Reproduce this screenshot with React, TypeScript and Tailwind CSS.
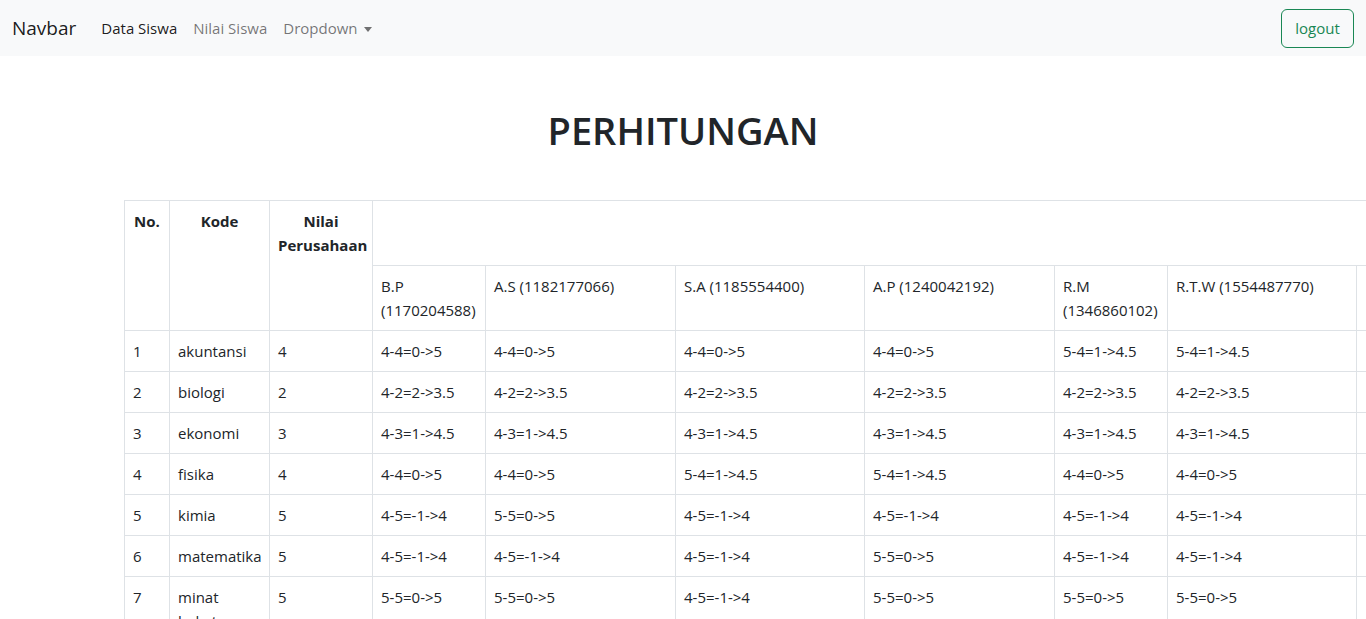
const students = [
  "B.P (1170204588)",
  "A.S (1182177066)",
  "S.A (1185554400)",
  "A.P (1240042192)",
  "R.M (1346860102)",
  "R.T.W (1554487770)",
];

const colWidths = [45, 100, 103, 113, 190, 189, 190, 113, 189, 190];

const rows: { no: number; kode: string; nilai: number; hasil: string[] }[] = [
  { no: 1, kode: "akuntansi", nilai: 4, hasil: ["4-4=0->5", "4-4=0->5", "4-4=0->5", "4-4=0->5", "5-4=1->4.5", "5-4=1->4.5"] },
  { no: 2, kode: "biologi", nilai: 2, hasil: ["4-2=2->3.5", "4-2=2->3.5", "4-2=2->3.5", "4-2=2->3.5", "4-2=2->3.5", "4-2=2->3.5"] },
  { no: 3, kode: "ekonomi", nilai: 3, hasil: ["4-3=1->4.5", "4-3=1->4.5", "4-3=1->4.5", "4-3=1->4.5", "4-3=1->4.5", "4-3=1->4.5"] },
  { no: 4, kode: "fisika", nilai: 4, hasil: ["4-4=0->5", "4-4=0->5", "5-4=1->4.5", "5-4=1->4.5", "4-4=0->5", "4-4=0->5"] },
  { no: 5, kode: "kimia", nilai: 5, hasil: ["4-5=-1->4", "5-5=0->5", "4-5=-1->4", "4-5=-1->4", "4-5=-1->4", "4-5=-1->4"] },
  { no: 6, kode: "matematika", nilai: 5, hasil: ["4-5=-1->4", "4-5=-1->4", "4-5=-1->4", "5-5=0->5", "4-5=-1->4", "4-5=-1->4"] },
  { no: 7, kode: "minat bakat", nilai: 5, hasil: ["5-5=0->5", "5-5=0->5", "4-5=-1->4", "5-5=0->5", "5-5=0->5", "5-5=0->5"] },
];

function Navbar() {
  return (
    <nav className="h-14 bg-[#f8f9fa] flex items-center justify-between px-3">
      <div className="flex items-center">
        <a className="text-[19px] leading-[30px] text-black/90 mr-[17px]">Navbar</a>
        <a className="px-2 py-2 text-[15px] text-black/90">Data Siswa</a>
        <a className="px-2 py-2 text-[15px] text-black/55">Nilai Siswa</a>
        <a className="px-2 py-2 text-[15px] text-black/55 flex items-center">
          Dropdown
          <span className="ml-[6px] mt-[2px] w-0 h-0 border-l-[4px] border-r-[4px] border-t-[5px] border-l-transparent border-r-transparent border-t-black/55" />
        </a>
      </div>
      <button className="h-[39px] w-[73px] rounded-md border border-[#198754] text-[#198754] bg-transparent text-[15px]">
        logout
      </button>
    </nav>
  );
}

export default function App() {
  const cell = "border border-[#dee2e6] p-2 align-top";
  return (
    <div
      className="min-h-screen bg-white text-[#212529] text-base leading-6 overflow-hidden"
      style={{ fontFamily: '"Open Sans", "Noto Sans", "Liberation Sans", sans-serif' }}
    >
      <Navbar />
      <h1 className="text-center text-[38px] leading-[48px] font-semibold mt-[50px] mb-[46px]">
        PERHITUNGAN
      </h1>
      <div className="pl-[124px]">
        <table className="table-fixed border-collapse w-[1422px] text-[15px]">
          <colgroup>
            {colWidths.map((w, i) => (
              <col key={i} style={{ width: w }} />
            ))}
          </colgroup>
          <thead>
            <tr>
              <th rowSpan={2} className={`${cell} font-bold text-center`}>No.</th>
              <th rowSpan={2} className={`${cell} font-bold text-center`}>Kode</th>
              <th rowSpan={2} className={`${cell} font-bold text-center`}>Nilai Perusahaan</th>
              <th colSpan={7} className={`${cell} h-[65px]`} />
            </tr>
            <tr>
              {students.map((s) => (
                <th key={s} className={`${cell} font-normal text-left h-[65px]`}>
                  {s}
                </th>
              ))}
              <th className={`${cell} h-[65px]`} />
            </tr>
          </thead>
          <tbody>
            {rows.map((r) => (
              <tr key={r.no}>
                <td className={cell}>{r.no}</td>
                <td className={cell}>{r.kode}</td>
                <td className={cell}>{r.nilai}</td>
                {r.hasil.map((h, i) => (
                  <td key={i} className={`${cell} whitespace-nowrap`}>
                    {h}
                  </td>
                ))}
                <td className={cell} />
              </tr>
            ))}
          </tbody>
        </table>
      </div>
    </div>
  );
}
